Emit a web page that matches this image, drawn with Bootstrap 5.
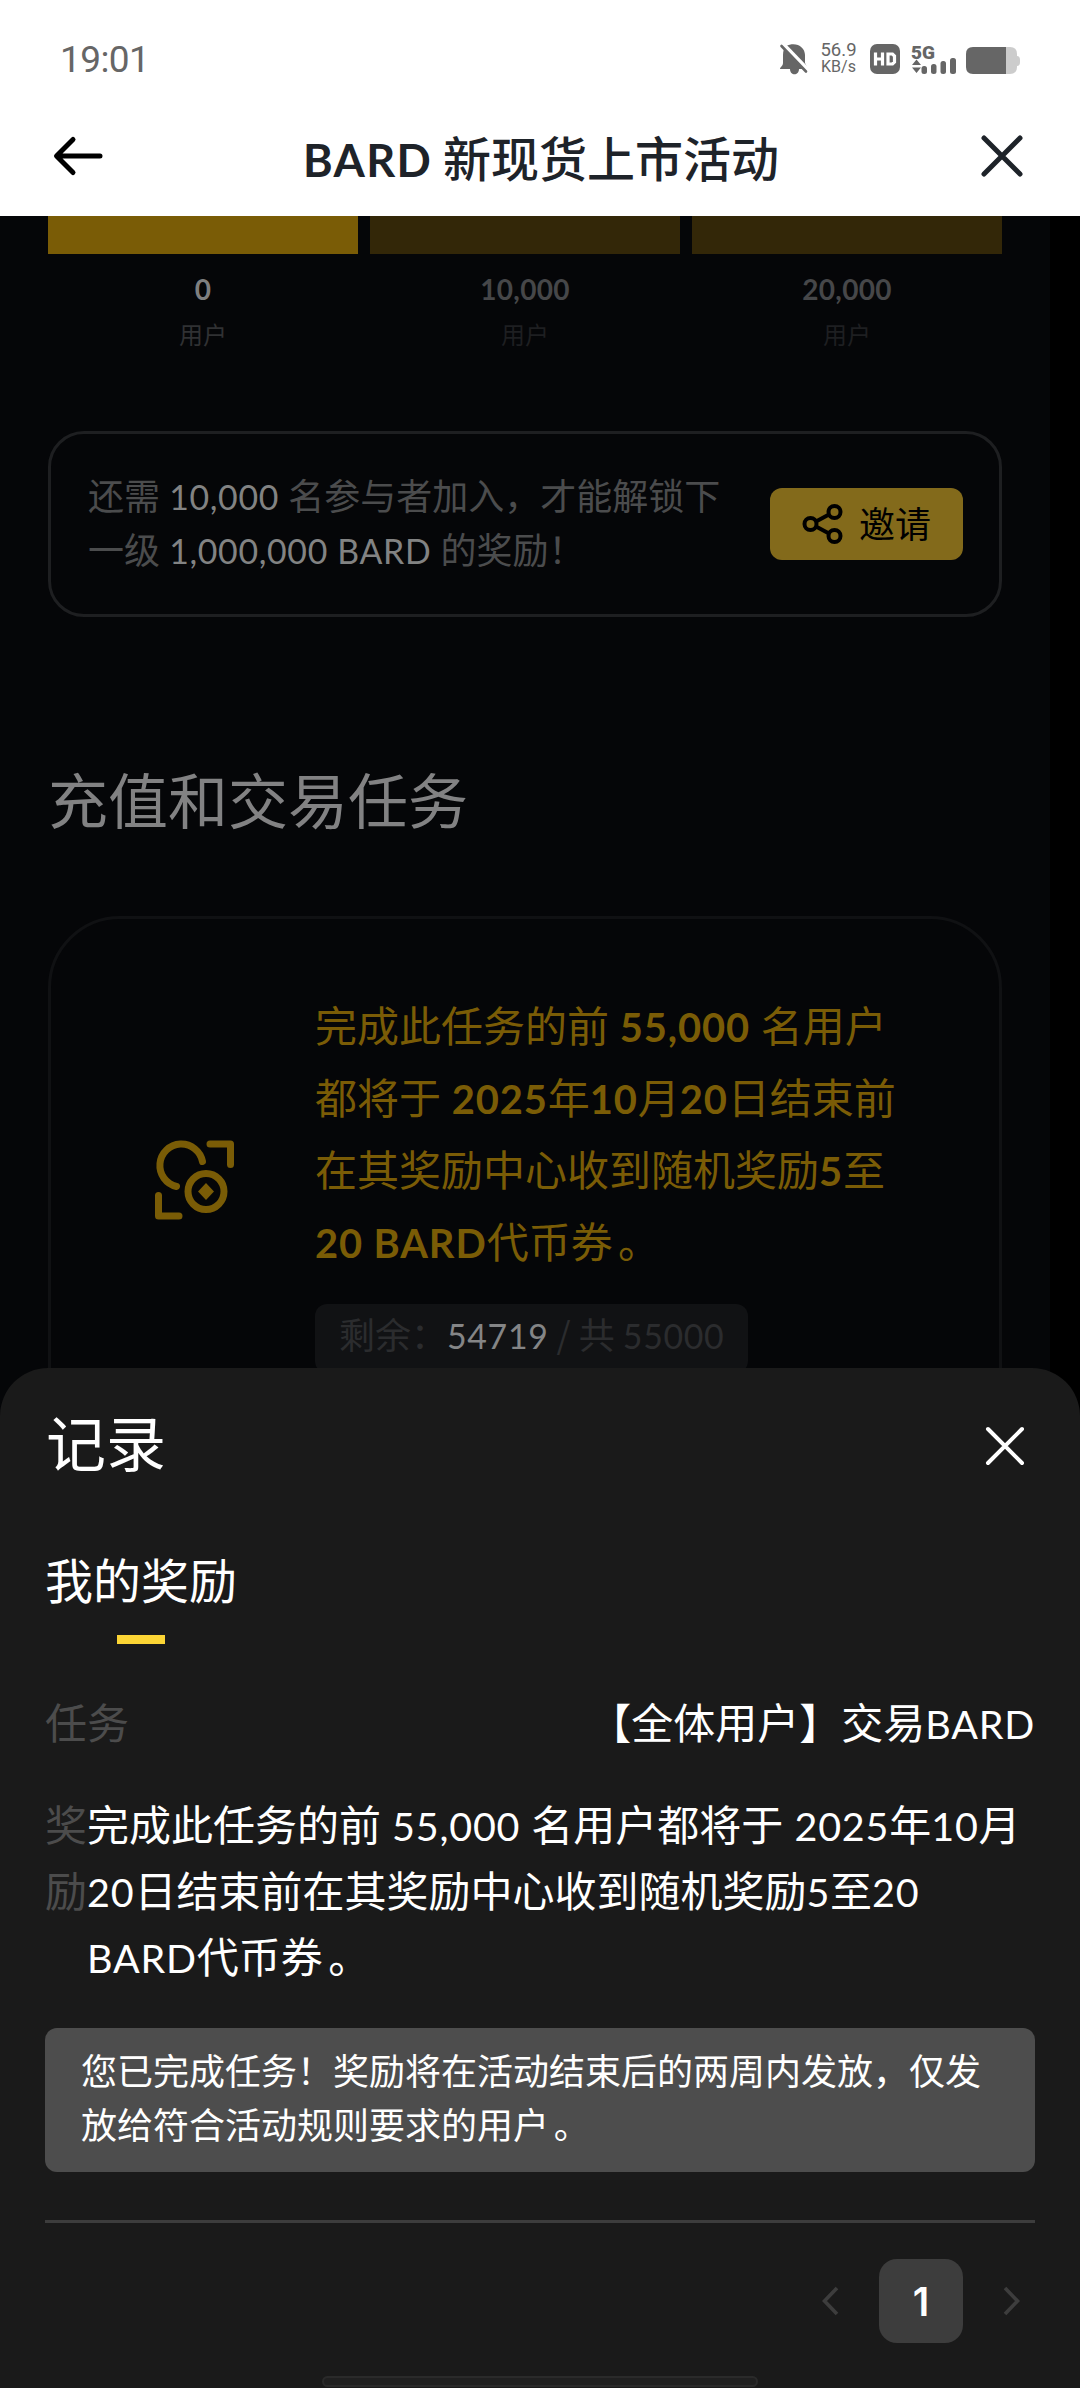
<!DOCTYPE html>
<html lang="zh-CN">
<head>
<meta charset="utf-8">
<meta name="viewport" content="width=device-width, initial-scale=1">
<title>BARD 新现货上市活动</title>
<link href="https://cdn.jsdelivr.net/npm/bootstrap@5.3.0/dist/css/bootstrap.min.css" rel="stylesheet">
<style>
body{font-family:"Noto Sans CJK SC",sans-serif;background:#000;color:#fff;height:2388px;overflow:hidden;position:relative}
svg{display:block;flex:none;overflow:visible}
.lt{font-family:Lato,"Noto Sans CJK SC",sans-serif;font-size:.94em;line-height:1;letter-spacing:.02em;word-spacing:0}
.pd{margin:0 -.13em 0 .13em}
.topbar{height:216px;background:#fff}
.statusbar{height:100px;padding:17px 60px 0 60px;color:#666}
.clock{font:400 37px/1 Roboto,sans-serif;letter-spacing:-.6px;padding-top:2px}
.netspeed{font-family:Roboto,sans-serif;width:37px;margin:0 13px 0 12px}
.netspeed .n1{font-size:18.500px;line-height:17px}
.netspeed .n2{font-size:16px;line-height:16px}
.titlebar{height:112px;padding:0 57px 0 53px}
.titlebar h1{font-size:48px;font-weight:500;line-height:1;color:#1e2329;padding:2px 2px 0 0}
.titlebar .lt{font-weight:700;letter-spacing:.03em}
.backdrop-page{width:1050px;height:2172px;background:#050608;padding:0 48px;overflow:hidden}
.tiers{gap:12px}
.tier{height:38px;background:#332708}
.tier.active{background:#7a5c06}
.tier-num{font:700 28px/32px Lato,sans-serif;color:#464749;margin-top:19px;letter-spacing:.3px}
.tier-unit{font-size:24px;line-height:36px;color:#1e1f21;margin-top:11px}
.on .tier-num{color:#7e7f80}.on .tier-unit{color:#303133}
.invite{height:186px;margin-top:79px;border:3px solid #1e1f21;border-radius:36px;padding:0 36px 0 37px}
.invite p{font-size:36px;line-height:54px;color:#4b4c4d;padding-bottom:7px;word-spacing:.03em}
.invite .lt{color:#828383}
.btn-invite{width:193px;height:72px;background:#836a1b;border-radius:12px;font-size:36px;line-height:1;color:#000;padding:0;gap:16px}
.btn-invite span{padding-bottom:5px}
.sect{font-size:60px;line-height:90px;color:#828283;margin-top:136px}
.task{height:600px;margin-top:73px;border:3px solid #101113;border-radius:72px;padding:69px 36px 0 104px}
.task-icon{margin-top:152px;margin-right:80px}
.task p{font-size:42px;line-height:72px;color:#7a5c06;word-spacing:.03em}
.task p .lt{font-weight:700;font-size:.95em;letter-spacing:.022em}
.left-pill{display:inline-block;background:#111214;border-radius:12px;height:69px;padding:0 24px;margin-top:28px;font-size:36px;line-height:59px;color:#2b2c2e}
.left-pill b{font-weight:400;color:#848586}
.sheet{position:absolute;left:0;right:0;bottom:0;height:1020px;background:#1a1a1a;border-radius:48px 48px 0 0;padding:0 45px}
.sheet h2{font-size:60px;line-height:90px;font-weight:400}
.sheet-head{padding:28px 10px 0 1px}
.sheet-head svg{margin-top:9px}
.tab-on{font-size:48px;line-height:72px;margin-top:56px;width:192px}
.tab-on::after{content:"";display:block;width:48px;height:9px;background:#fcd535;margin:21px 0 0 72px}
.rec{font-size:42px;line-height:66px;word-spacing:.04em}
.rec-a{margin-top:44px}
.rec-b{margin-top:36px}
.rec .lab{color:#4c4c4c}
.notice{background:#4d4d4d;border-radius:12px;height:144px;margin-top:40px;padding:14px 36px;font-size:36px;line-height:54px}
.rule{height:3px;background:#3d3d3d;margin-top:48px}
.pager{margin-top:36px;padding-right:15px}
.pg{width:84px;height:84px;border-radius:18px;background:#3d3d3d;font:600 39px/1 Inter,sans-serif;margin:0 40px}
.handle{position:absolute;left:322px;bottom:1px;width:436px;height:11px;border:2px solid #2a2a2a;border-radius:6px;background:#202020}
</style>
</head>
<body>
<header class="topbar">
  <div class="statusbar d-flex align-items-center justify-content-between">
    <span class="clock">19:01</span>
    <div class="d-flex align-items-center">
      <svg width="28" height="30" viewBox="0 0 28 30"><path d="M6 2C16-3 25 3 25 11v8l2 4v2h-8c0 7-9 7-9 0H0c0-2 3-3 3-6v-8C3 7 4 4 6 2z" fill="#666"/><path d="M3 0L29 27" stroke="#fff" stroke-width="4"/><path d="M1.500 2L26 27.500" stroke="#666" stroke-width="2.600" stroke-linecap="round"/></svg>
      <div class="netspeed text-center"><div class="n1">56.9</div><div class="n2">KB/s</div></div>
      <svg width="30" height="30" viewBox="0 0 30 30"><rect width="30" height="30" rx="7" fill="#666"/><path d="M5.500 8.500v13M12.500 8.500v13M5.500 15h7M18 10h4.500l2 2v6l-2 2H18z" fill="none" stroke="#fff" stroke-width="3.200"/></svg>
      <svg class="ms-2" width="50" height="30" viewBox="-4 0 50 30"><text x="-1" y="14.500" font-family="Roboto" font-weight="900" font-size="19" fill="#666">5G</text><path d="M0 21l4.500-5.500L9 21zM0 23.500h9L4.500 29z" fill="#666"/><g fill="#666"><rect x="9.500" y="22" width="5.500" height="8" rx="2.500"/><rect x="19" y="20" width="5.500" height="10" rx="2.500"/><rect x="28.500" y="17" width="5.500" height="13" rx="2.500"/><rect x="38" y="14" width="6" height="16" rx="2.500"/></g></svg>
      <svg class="ms-2" width="54" height="30" viewBox="0 0 54 30"><path d="M40 3h4q7 0 7 7v2q3 0 3 4v2q0 4-3 4v1q0 7-7 7h-4z" fill="#ccc"/><path d="M7 3h33v27H7q-7 0-7-7V10q0-7 7-7z" fill="#666"/></svg>
    </div>
  </div>
  <div class="titlebar d-flex align-items-center justify-content-between">
    <svg width="50" height="40" viewBox="0 0 50 40"><path d="M47 20H4M20 3.500L3.500 20 20 36.500" fill="none" stroke="#000" stroke-width="5" stroke-linecap="round" stroke-linejoin="round"/></svg>
    <h1 class="m-0"><span class="lt">BARD</span> 新现货上市活动</h1>
    <svg width="42" height="42" viewBox="0 0 42 42"><path d="M3 3l36 36M39 3L3 39" stroke="#1e2329" stroke-width="5" stroke-linecap="round"/></svg>
  </div>
</header>

<main class="backdrop-page">
  <div class="tiers d-flex text-center">
    <div class="flex-fill w-100 on"><div class="tier active"></div><div class="tier-num">0</div><div class="tier-unit">用户</div></div>
    <div class="flex-fill w-100"><div class="tier"></div><div class="tier-num">10,000</div><div class="tier-unit">用户</div></div>
    <div class="flex-fill w-100"><div class="tier"></div><div class="tier-num">20,000</div><div class="tier-unit">用户</div></div>
  </div>

  <section class="invite d-flex align-items-center justify-content-between">
    <p class="m-0 text-nowrap">还需 <span class="lt">10,000</span> 名参与者加入，才能解锁下<br>一级 <span class="lt">1,000,000 BARD</span> 的奖励！</p>
    <button class="btn btn-invite d-flex align-items-center justify-content-center">
      <svg width="41" height="40" viewBox="0 0 41 40"><g fill="none" stroke="#000" stroke-width="4"><circle cx="8.500" cy="20" r="6"/><circle cx="32.500" cy="8" r="6"/><circle cx="32.500" cy="32" r="6"/><path d="M14 17.500l13-7M14 22.500l13 7"/></g></svg>
      <span>邀请</span>
    </button>
  </section>

  <div class="sect">充值和交易任务</div>

  <section class="task d-flex align-items-start">
    <svg class="task-icon" width="80" height="80" viewBox="0 0 80 80"><g fill="none" stroke="#7a5c06" stroke-width="7" stroke-linecap="round" stroke-linejoin="round"><path d="M55 4h20.500v20.500M3.500 55.500V76H24"/><path d="M21.500 46.500A21.500 21.500 0 1 1 47.500 21.500"/><circle cx="51" cy="51.500" r="18"/></g><path d="M51 43l8 8.500-8 8.500-8-8.500z" fill="#7a5c06"/></svg>
    <div>
      <p class="m-0 text-nowrap">完成此任务的前 <span class="lt">55,000</span> 名用户<br>都将于 <span class="lt">2025</span>年<span class="lt">10</span>月<span class="lt">20</span>日结束前<br>在其奖励中心收到随机奖励<span class="lt">5</span>至<br><span class="lt">20 BARD</span>代币券<span class="pd">。</span></p>
      <div class="left-pill text-nowrap">剩余：<b class="lt">54719</b> / 共 <span class="lt">55000</span></div>
    </div>
  </section>
</main>

<section class="sheet">
  <div class="sheet-head d-flex align-items-center justify-content-between">
    <h2 class="m-0">记录</h2>
    <svg width="40" height="40" viewBox="0 0 40 40"><path d="M3 3l34 34M37 3L3 37" stroke="#fff" stroke-width="4" stroke-linecap="round"/></svg>
  </div>
  <div class="tab-on">我的奖励</div>
  <div class="rec rec-a d-flex justify-content-between text-nowrap">
    <span class="lab">任务</span><span>【全体用户】交易<span class="lt">BARD</span></span>
  </div>
  <div class="rec rec-b d-flex">
    <span class="lab">奖<br>励</span>
    <span class="text-nowrap">完成此任务的前 <span class="lt">55,000</span> 名用户都将于 <span class="lt">2025</span>年<span class="lt">10</span>月<br><span class="lt">20</span>日结束前在其奖励中心收到随机奖励<span class="lt">5</span>至<span class="lt">20</span><br><span class="lt">BARD</span>代币券<span class="pd">。</span></span>
  </div>
  <div class="notice text-nowrap">您已完成任务！奖励将在活动结束后的两周内发放，仅发<br>放给符合活动规则要求的用户<span class="pd">。</span></div>
  <div class="rule"></div>
  <div class="pager d-flex align-items-center justify-content-end">
    <svg width="17" height="30" viewBox="0 0 17 30"><path d="M15 2L2.500 15 15 28" fill="none" stroke="#3d3d3d" stroke-width="3.600"/></svg>
    <span class="pg d-flex align-items-center justify-content-center">1</span>
    <svg width="17" height="30" viewBox="0 0 17 30"><path d="M2 2l12.500 13L2 28" fill="none" stroke="#3d3d3d" stroke-width="3.600"/></svg>
  </div>
  <div class="handle"></div>
</section>
<script src="https://cdn.jsdelivr.net/npm/bootstrap@5.3.0/dist/js/bootstrap.bundle.min.js"></script>
</body>
</html>
